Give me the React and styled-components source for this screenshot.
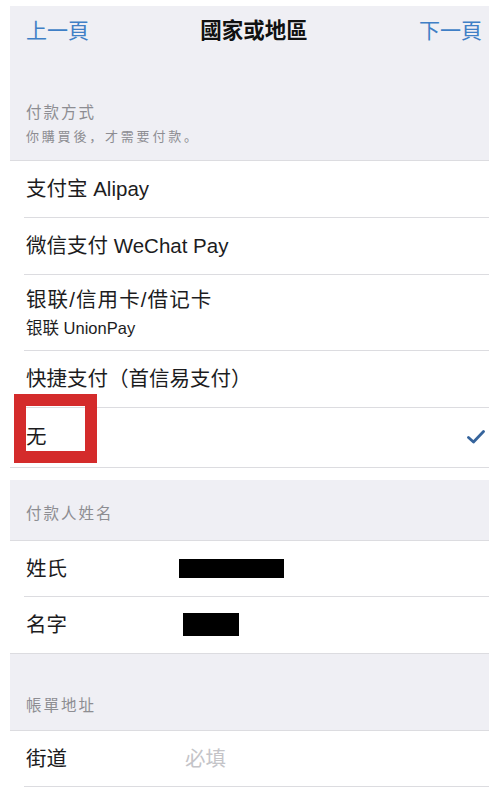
import React from 'react'
import styled, { createGlobalStyle } from 'styled-components'

const GlobalStyle = createGlobalStyle`
    html, body {
        margin: 0;
        padding: 0;
        background: #fff;
    }
    body {
        font-family: "Liberation Sans", "Noto Sans CJK SC", sans-serif;
        color: #1c1c1e;
        overflow: hidden;
    }
`

const payments = [
    { label: '支付宝 Alipay' },
    { label: '微信支付 WeChat Pay' },
    { label: '银联/信用卡/借记卡', sub: '银联 UnionPay' },
    { label: '快捷支付（首信易支付）' },
    { label: '无', checked: true, marked: true },
]

const App = () => {
    return (
        <Screen>
            <GlobalStyle />
            <NavBar>
                <NavLink>上一頁</NavLink>
                <NavTitle>國家或地區</NavTitle>
                <NavLink $right>下一頁</NavLink>
            </NavBar>

            <SectionHeader $top={47} $bottom={14}>
                <SectionTitle>付款方式</SectionTitle>
                <SectionNote>你購買後，才需要付款。</SectionNote>
            </SectionHeader>

            <Group>
                {payments.map((p, index) => (
                    <Row key={index} $h={p.sub ? 76 : index === payments.length - 1 ? 59 : 57}>
                        {p.marked && <Marker />}
                        <RowInner>
                            <LabelBlock>
                                <Label $spaced={!!p.sub}>{p.label}</Label>
                                {p.sub && <SubLabel>{p.sub}</SubLabel>}
                            </LabelBlock>
                            {p.checked && (
                                <svg width="18" height="14" viewBox="0 0 18 14">
                                    <polyline points="1.5,7.5 6.5,12 16.5,1.5" fill="none" stroke="#36649c" strokeWidth="2.8" strokeLinecap="round" strokeLinejoin="round" />
                                </svg>
                            )}
                        </RowInner>
                    </Row>
                ))}
            </Group>
            <Spacer />

            <SectionHeader $top={24} $bottom={16}>
                <SectionTitle>付款人姓名</SectionTitle>
            </SectionHeader>

            <Group>
                <Row $h={56}>
                    <RowInner>
                        <FieldLabel>姓氏</FieldLabel>
                        <Redact $w={105} $h={19} $shift={-3} />
                    </RowInner>
                </Row>
                <Row $h={56}>
                    <RowInner>
                        <FieldLabel>名字</FieldLabel>
                        <Redact $w={56} $h={23} $shift={1} />
                    </RowInner>
                </Row>
            </Group>

            <SectionHeader $top={42} $bottom={14}>
                <SectionTitle>帳單地址</SectionTitle>
            </SectionHeader>

            <Group $open>
                <Row $h={56}>
                    <RowInner>
                        <FieldLabel>街道</FieldLabel>
                        <Placeholder>必填</Placeholder>
                    </RowInner>
                </Row>
            </Group>
        </Screen>
    )
}

export default App



const Screen = styled.div`
    padding: 6px 10px 0;
    height: 800px;
    box-sizing: border-box;
`

const NavBar = styled.div`
    display: grid;
    grid-template-columns: 1fr auto 1fr;
    align-items: center;
    height: 50px;
    padding: 0 7px 0 16px;
    background: #efeff4;
`

const NavLink = styled.div`
    font-size: 21px;
    line-height: 26px;
    color: #3f7fc6;
    text-align: ${p => p.$right ? 'right' : 'left'};
`

const NavTitle = styled.div`
    font-size: 21.5px;
    line-height: 26px;
    font-weight: 700;
    color: #111;
`

const SectionHeader = styled.div`
    background: #efeff4;
    padding: ${p => p.$top}px 16px ${p => p.$bottom}px;
`

const SectionTitle = styled.div`
    font-size: 15.5px;
    line-height: 20px;
    letter-spacing: 2px;
    color: #8d8d92;
`

const SectionNote = styled.div`
    margin-top: 5px;
    font-size: 13px;
    line-height: 18px;
    letter-spacing: 2.8px;
    color: #8d8d92;
`

const Group = styled.div`
    background: #fff;
    border-top: 1px solid #dcdce0;
    border-bottom: ${p => p.$open ? 'none' : '1px solid #dcdce0'};

    & > div:last-child > div:last-child {
        border-bottom-color: ${p => p.$open ? '#dcdce0' : 'transparent'};
    }
`

const Row = styled.div`
    position: relative;
    display: flex;
    height: ${p => p.$h}px;
    padding-left: 14px;
    background: #fff;
`

const RowInner = styled.div`
    flex: 1;
    display: flex;
    align-items: center;
    justify-content: space-between;
    padding: 0 4px 0 2px;
    border-bottom: 1px solid #dcdce0;
`

const LabelBlock = styled.div`
    display: flex;
    flex-direction: column;
    gap: 7px;
`

const Label = styled.div`
    font-size: 20.5px;
    line-height: 24px;
    color: #1c1c1e;
    letter-spacing: ${p => p.$spaced ? '1.1px' : '0'};
`

const SubLabel = styled.div`
    font-size: 16.5px;
    line-height: 18px;
    color: #1c1c1e;
`

const FieldLabel = styled(Label)`
    width: 156px;
    flex-shrink: 0;
`

const Redact = styled.span`
    display: block;
    width: ${p => p.$w}px;
    height: ${p => p.$h}px;
    margin-left: ${p => p.$shift}px;
    margin-right: auto;
    background: #000;
`

const Placeholder = styled.div`
    margin-right: auto;
    margin-left: 3px;
    font-size: 20.5px;
    line-height: 24px;
    color: #c4c4c8;
`

const Marker = styled.div`
    position: absolute;
    left: 4px;
    top: -14px;
    width: 83px;
    height: 69px;
    box-sizing: border-box;
    border: 12px solid #d42b2b;
    pointer-events: none;
`

const Spacer = styled.div`
    height: 12px;
    background: #fff;
`
